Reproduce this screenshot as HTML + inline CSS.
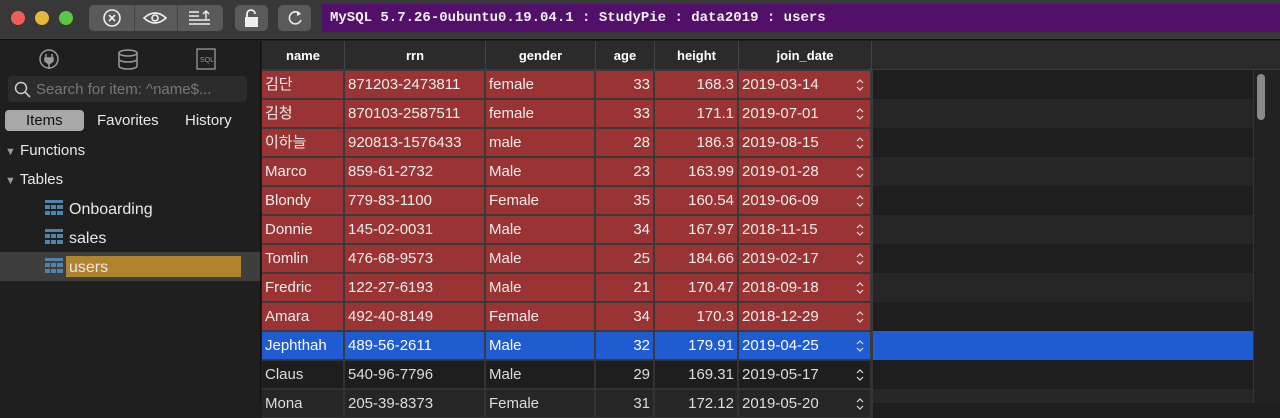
<!DOCTYPE html><html><head><meta charset="utf-8"><style>
*{margin:0;padding:0;box-sizing:border-box}
body{width:1280px;height:403px;overflow:hidden;background:#1e1e1e;font-family:"Liberation Sans","Noto Sans CJK KR",sans-serif;color:#ddd;position:relative}
.abs{position:absolute}
#tb{left:0;top:0;width:1280px;height:40px;background:#383838;border-bottom:1px solid #111}
.dot{width:14px;height:14px;border-radius:50%;top:11px}
.btn{background:#5a5a5a;border-radius:5px;top:5px;height:26px}
#purple{left:322px;top:4px;width:958px;height:28px;background:#52106a;font-family:"Liberation Mono",monospace;font-size:14px;font-weight:bold;color:#f0f0f0;line-height:28px;padding-left:8px}
#side{left:0;top:41px;width:261px;height:362px;background:#1f1f1f;border-right:1px solid #111}
.stext{font-size:15px;color:#e8e8e8}
.row{position:absolute;left:262px;height:29px;width:611px;background:#3a3a3a;display:flex;font-size:15px}
.row div{height:27px;margin-top:1px;margin-right:2px;background:#9a3333;color:#eee;line-height:27px;padding:0 3px;white-space:nowrap;overflow:hidden;position:relative}
.row .r{text-align:right}
.row.b div{background:#1f5bd1;color:#fff}
.row.d{background:#333}
.row.d div{background:#1e1e1e;color:#ddd}
.row.d2{background:#333}
.row.d2 div{background:#262626;color:#ddd}
.c1{width:81px}.c2{width:139px}.c3{width:108px}.c4{width:57px}.c5{width:82px}.c6{width:131px}
.hd{position:absolute;top:41px;height:29px;color:#fff;font-size:13px;font-weight:bold;text-align:center;line-height:29px;border-right:1px solid #444}
.sp{position:absolute;right:6px;top:7px}
</style></head><body>
<div id="tb" class="abs">
<div class="abs dot" style="left:11px;background:#ee5e57"></div>
<div class="abs dot" style="left:35px;background:#e3b93d"></div>
<div class="abs dot" style="left:59px;background:#5bc644"></div>
<div class="abs btn" style="left:89px;width:134px"></div>
<div class="abs" style="left:134px;top:5px;width:1px;height:26px;background:#444"></div>
<div class="abs" style="left:177px;top:5px;width:1px;height:26px;background:#444"></div>
<svg class="abs" style="left:100px;top:8px" width="120" height="20"><circle cx="12" cy="10" r="8" fill="none" stroke="#eee" stroke-width="1.6"/><path d="M9 7l6 6M15 7l-6 6" stroke="#eee" stroke-width="1.6"/><path d="M44 10q11-10 22 0q-11 10-22 0z" fill="none" stroke="#eee" stroke-width="1.6"/><circle cx="55" cy="10" r="3" fill="none" stroke="#eee" stroke-width="1.6"/><path d="M89 4h10M89 8h10M89 12h21M89 16h21M106 3v8M103 6l3-3 3 3" stroke="#eee" stroke-width="1.4" fill="none"/></svg>
<div class="abs btn" style="left:235px;width:33px"></div>
<svg class="abs" style="left:243px;top:8px" width="18" height="20"><rect x="2" y="9" width="13" height="10" fill="#eee"/><path d="M4 9V6a4 4 0 0 1 8 0" fill="none" stroke="#eee" stroke-width="1.8"/></svg>
<div class="abs btn" style="left:278px;width:33px"></div>
<svg class="abs" style="left:285px;top:8px" width="20" height="20"><path d="M15 6a6 6 0 1 0 1 6" fill="none" stroke="#eee" stroke-width="1.6"/><path d="M12 3l4 3-4 2z" fill="#eee"/></svg>
<div id="purple" class="abs">MySQL 5.7.26-0ubuntu0.19.04.1 : StudyPie : data2019 : users</div>
</div>
<div id="side" class="abs">
<svg class="abs" style="left:36px;top:7px" width="190" height="24"><circle cx="13" cy="11" r="9" fill="none" stroke="#999" stroke-width="1.5"/><path d="M10 6v4M16 6v4M9 10h8v3l-4 3-4-3zM13 16v5" stroke="#999" stroke-width="1.5" fill="#999"/><ellipse cx="92" cy="5" rx="9" ry="3" fill="none" stroke="#999" stroke-width="1.5"/><path d="M83 5v13c0 4 18 4 18 0V5M83 11c0 4 18 4 18 0" fill="none" stroke="#999" stroke-width="1.5"/><rect x="161" y="1" width="18" height="20" fill="none" stroke="#999" stroke-width="1.3"/><text x="164" y="14" font-size="7" fill="#999" font-family="Liberation Sans">SQL</text></svg>
<div class="abs" style="left:8px;top:35px;width:239px;height:26px;background:#2c2c2c;border-radius:4px"></div>
<svg class="abs" style="left:14px;top:40px" width="18" height="18"><circle cx="7" cy="7" r="5.5" fill="none" stroke="#ccc" stroke-width="1.5"/><path d="M11 11l5 5" stroke="#ccc" stroke-width="1.6"/></svg>
<div class="abs" style="left:36px;top:40px;font-size:15px;color:#777">Search for item: ^name$...</div>
<div class="abs" style="left:5px;top:69px;width:79px;height:21px;background:#a8a8a8;border-radius:4px"></div>
<div class="abs stext" style="left:26px;top:71px;color:#111">Items</div>
<div class="abs stext" style="left:97px;top:71px">Favorites</div>
<div class="abs stext" style="left:185px;top:71px">History</div>
<div class="abs stext" style="left:5px;top:101px"><span style="font-size:11px;color:#999">▼</span> Functions</div>
<div class="abs stext" style="left:5px;top:130px"><span style="font-size:11px;color:#999">▼</span> Tables</div>
<div class="abs" style="left:0;top:211px;width:260px;height:29px;background:#3e3e3e"></div>
<div class="abs" style="left:66px;top:215px;width:175px;height:21px;background:#b0832e"></div>
<svg class="abs" style="left:45px;top:159px" width="20" height="80"><g id="g" fill="#4f85ad"><rect x="0" y="0" width="18" height="3"/><rect x="0" y="5" width="5" height="4"/><rect x="6" y="5" width="5" height="4"/><rect x="12" y="5" width="6" height="4"/><rect x="0" y="11" width="5" height="4"/><rect x="6" y="11" width="5" height="4"/><rect x="12" y="11" width="6" height="4"/></g><g fill="#4f85ad" transform="translate(0,29)"><rect x="0" y="0" width="18" height="3"/><rect x="0" y="5" width="5" height="4"/><rect x="6" y="5" width="5" height="4"/><rect x="12" y="5" width="6" height="4"/><rect x="0" y="11" width="5" height="4"/><rect x="6" y="11" width="5" height="4"/><rect x="12" y="11" width="6" height="4"/></g><g fill="#4f85ad" transform="translate(0,58)"><rect x="0" y="0" width="18" height="3"/><rect x="0" y="5" width="5" height="4"/><rect x="6" y="5" width="5" height="4"/><rect x="12" y="5" width="6" height="4"/><rect x="0" y="11" width="5" height="4"/><rect x="6" y="11" width="5" height="4"/><rect x="12" y="11" width="6" height="4"/></g></svg>
<div class="abs stext" style="left:69px;top:160px;font-size:16px">Onboarding</div>
<div class="abs stext" style="left:69px;top:189px;font-size:16px">sales</div>
<div class="abs stext" style="left:69px;top:218px;font-size:16px">users</div>
</div>
<div class="abs" style="left:262px;top:41px;width:1018px;height:29px;background:#2b2b2b;border-bottom:1px solid #3a3a3a"></div>
<div class="hd" style="left:262px;width:83px">name</div>
<div class="hd" style="left:345px;width:141px">rrn</div>
<div class="hd" style="left:486px;width:110px">gender</div>
<div class="hd" style="left:596px;width:59px">age</div>
<div class="hd" style="left:655px;width:84px">height</div>
<div class="hd" style="left:739px;width:133px">join_date</div>
<div class="abs" style="left:262px;top:70px;width:1018px;height:333px;background:repeating-linear-gradient(#1e1e1e 0 29px,#262626 29px 58px)"></div>
<svg width="0" height="0" style="position:absolute"><defs><symbol id="s" viewBox="0 0 8 14"><path d="M1 5l3-3 3 3M1 9l3 3 3-3" fill="none" stroke="#ddd" stroke-width="1.2"/></symbol></defs></svg>
<div class="row" style="top:70px"><div class="c1">김단</div><div class="c2">871203-2473811</div><div class="c3">female</div><div class="c4 r">33</div><div class="c5 r">168.3</div><div class="c6">2019-03-14<svg class="sp" width="8" height="14"><use href="#s"/></svg></div></div>
<div class="row" style="top:99px"><div class="c1">김청</div><div class="c2">870103-2587511</div><div class="c3">female</div><div class="c4 r">33</div><div class="c5 r">171.1</div><div class="c6">2019-07-01<svg class="sp" width="8" height="14"><use href="#s"/></svg></div></div>
<div class="row" style="top:128px"><div class="c1">이하늘</div><div class="c2">920813-1576433</div><div class="c3">male</div><div class="c4 r">28</div><div class="c5 r">186.3</div><div class="c6">2019-08-15<svg class="sp" width="8" height="14"><use href="#s"/></svg></div></div>
<div class="row" style="top:157px"><div class="c1">Marco</div><div class="c2">859-61-2732</div><div class="c3">Male</div><div class="c4 r">23</div><div class="c5 r">163.99</div><div class="c6">2019-01-28<svg class="sp" width="8" height="14"><use href="#s"/></svg></div></div>
<div class="row" style="top:186px"><div class="c1">Blondy</div><div class="c2">779-83-1100</div><div class="c3">Female</div><div class="c4 r">35</div><div class="c5 r">160.54</div><div class="c6">2019-06-09<svg class="sp" width="8" height="14"><use href="#s"/></svg></div></div>
<div class="row" style="top:215px"><div class="c1">Donnie</div><div class="c2">145-02-0031</div><div class="c3">Male</div><div class="c4 r">34</div><div class="c5 r">167.97</div><div class="c6">2018-11-15<svg class="sp" width="8" height="14"><use href="#s"/></svg></div></div>
<div class="row" style="top:244px"><div class="c1">Tomlin</div><div class="c2">476-68-9573</div><div class="c3">Male</div><div class="c4 r">25</div><div class="c5 r">184.66</div><div class="c6">2019-02-17<svg class="sp" width="8" height="14"><use href="#s"/></svg></div></div>
<div class="row" style="top:273px"><div class="c1">Fredric</div><div class="c2">122-27-6193</div><div class="c3">Male</div><div class="c4 r">21</div><div class="c5 r">170.47</div><div class="c6">2018-09-18<svg class="sp" width="8" height="14"><use href="#s"/></svg></div></div>
<div class="row" style="top:302px"><div class="c1">Amara</div><div class="c2">492-40-8149</div><div class="c3">Female</div><div class="c4 r">34</div><div class="c5 r">170.3</div><div class="c6">2018-12-29<svg class="sp" width="8" height="14"><use href="#s"/></svg></div></div>
<div class="abs" style="left:262px;top:331px;width:991px;height:29px;background:#1f5bd1"></div>
<div class="row b" style="top:331px"><div class="c1">Jephthah</div><div class="c2">489-56-2611</div><div class="c3">Male</div><div class="c4 r">32</div><div class="c5 r">179.91</div><div class="c6">2019-04-25<svg class="sp" width="8" height="14"><use href="#s"/></svg></div></div>
<div class="row d" style="top:360px"><div class="c1">Claus</div><div class="c2">540-96-7796</div><div class="c3">Male</div><div class="c4 r">29</div><div class="c5 r">169.31</div><div class="c6">2019-05-17<svg class="sp" width="8" height="14"><use href="#s"/></svg></div></div>
<div class="row d2" style="top:389px"><div class="c1">Mona</div><div class="c2">205-39-8373</div><div class="c3">Female</div><div class="c4 r">31</div><div class="c5 r">172.12</div><div class="c6">2019-05-20<svg class="sp" width="8" height="14"><use href="#s"/></svg></div></div>
<div class="abs" style="left:1253px;top:70px;width:27px;height:333px;background:#222;border-left:1px solid #333"></div>
<div class="abs" style="left:1257px;top:74px;width:8px;height:46px;background:#8a8a8a;border-radius:4px"></div>
</body></html>
